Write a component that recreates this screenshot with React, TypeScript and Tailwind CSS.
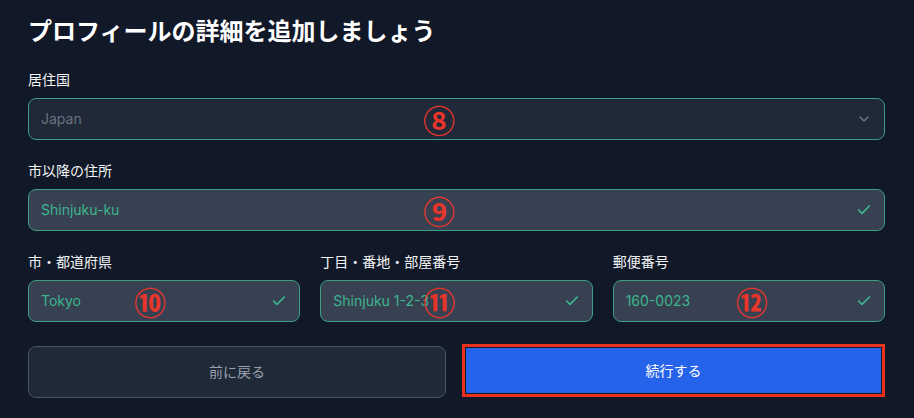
import { Check, ChevronDown } from "lucide-react";

const font = { fontFamily: 'Inter, "Noto Sans CJK JP", sans-serif' };

// Red circled markers laid over the fields
const Marker = ({ n, className }: { n: string; className: string }) => (
  <span
    className={`pointer-events-none absolute top-1/2 -translate-y-1/2 text-[32px] leading-none font-bold text-[#e8352b] ${className}`}
    style={{ fontFamily: '"Noto Sans CJK JP", sans-serif' }}
  >
    {n}
  </span>
);

const Field = ({
  label,
  value,
  marker,
  markerPos,
}: {
  label: string;
  value: string;
  marker: string;
  markerPos: string;
}) => (
  <div className="flex flex-col">
    <label className="mb-2 text-sm leading-5 text-gray-100">{label}</label>
    <div className="relative flex h-[42px] items-center rounded-lg border border-[#3a9f83] bg-[#374151] px-3">
      <span className="text-sm text-[#3db58d]">{value}</span>
      <Check className="ml-auto h-4 w-4 text-[#3db58d]" strokeWidth={2.5} />
      <Marker n={marker} className={markerPos} />
    </div>
  </div>
);

export default function App() {
  return (
    <div className="min-h-screen w-full bg-[#111827] pt-4 pr-[29px] pl-7" style={font}>
      <h1 className="text-2xl leading-8 font-bold text-white">プロフィールの詳細を追加しましょう</h1>

      <div className="mt-[22px] flex flex-col">
        <label className="mb-2 text-sm leading-5 text-gray-100">居住国</label>
        <div className="relative flex h-[42px] items-center rounded-lg border border-[#3a9f83] bg-[#1f2937] px-3">
          <span className="text-sm text-gray-500">Japan</span>
          <ChevronDown className="ml-auto h-4 w-4 text-gray-500" strokeWidth={2.5} />
          <Marker n="⑧" className="left-[394px]" />
        </div>
      </div>

      <div className="mt-[21px]">
        <Field label="市以降の住所" value="Shinjuku-ku" marker="⑨" markerPos="left-[394px]" />
      </div>

      <div className="mt-[21px] grid grid-cols-3 gap-5">
        <Field label="市・都道府県" value="Tokyo" marker="⑩" markerPos="left-[105px]" />
        <Field label="丁目・番地・部屋番号" value="Shinjuku 1-2-3" marker="⑪" markerPos="left-[102px]" />
        <Field label="郵便番号" value="160-0023" marker="⑫" markerPos="left-[122px]" />
      </div>

      <div className="mt-6 grid grid-cols-[418px_1fr] gap-4">
        <button className="h-[52px] rounded-lg border border-gray-600 bg-[#1f2937] text-sm text-gray-400">
          前に戻る
        </button>
        <div className="-mt-0.5 h-[53px] border-[3px] border-[#e8321e] p-px">
          <button className="h-full w-full bg-[#2563eb] text-sm text-white">続行する</button>
        </div>
      </div>
    </div>
  );
}
